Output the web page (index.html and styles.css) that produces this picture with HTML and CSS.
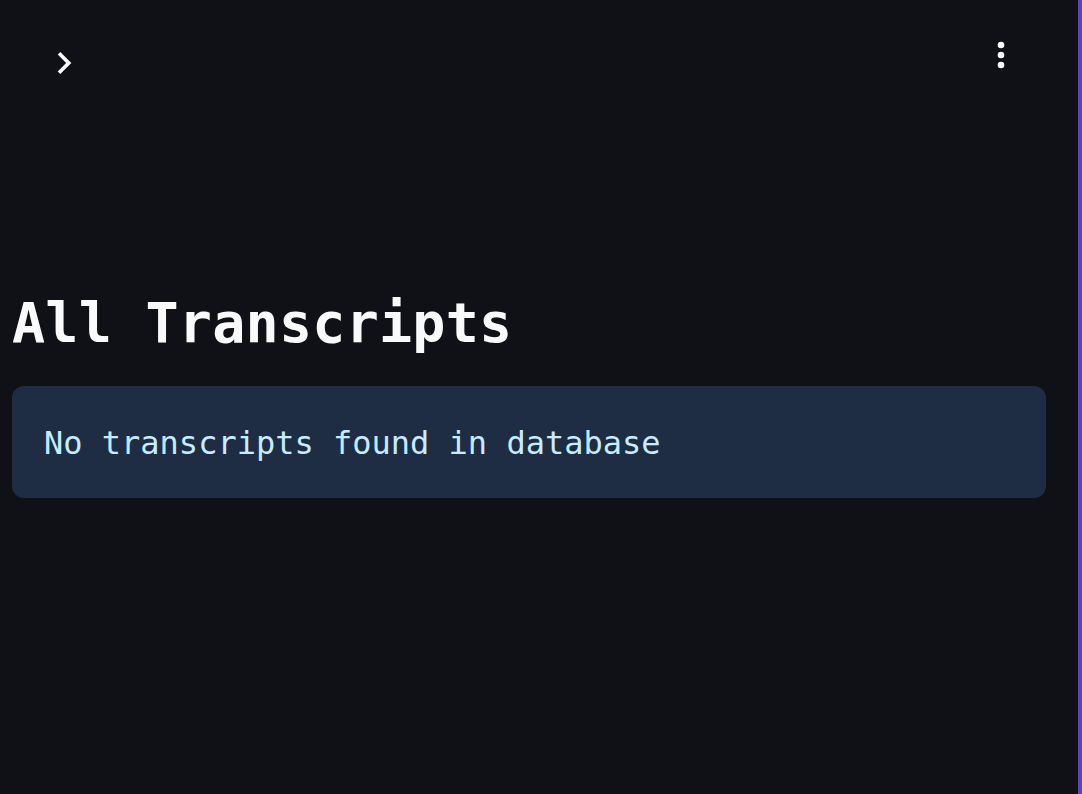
FILE: index.html
```html
<!DOCTYPE html>
<html lang="en">
<head>
<meta charset="utf-8">
<title>All Transcripts</title>
<link rel="stylesheet" href="styles.css">
</head>
<body>
<div class="app">
  <div class="main">
    <header class="topbar">
      <button class="icon-btn chevron" aria-label="Open sidebar">
        <svg viewBox="0 0 24 24" width="44" height="44"><path d="M10 6L8.59 7.41 13.17 12l-4.58 4.59L10 18l6-6z" fill="#fafafa"/></svg>
      </button>
      <button class="icon-btn menu" aria-label="Main menu">
        <svg viewBox="0 0 24 24" width="40" height="40"><circle cx="12" cy="6" r="2" fill="#fafafa"/><circle cx="12" cy="12" r="2" fill="#fafafa"/><circle cx="12" cy="18" r="2" fill="#fafafa"/></svg>
      </button>
    </header>
    <section class="content">
      <h1 class="title">All Transcripts</h1>
      <div class="alert">No transcripts found in database</div>
    </section>
  </div>
  <div class="stripe"></div>
</div>
</body>
</html>
```
FILE: styles.css
```css
html, body {
  margin: 0;
  padding: 0;
  background: #0f1117;
  height: 100%;
}
.app {
  display: flex;
  min-height: 100vh;
  font-family: "DejaVu Sans Mono", "Liberation Mono", monospace;
}
.main {
  flex: 1;
  display: flex;
  flex-direction: column;
}
.stripe {
  width: 4px;
  background: #5b3fd0;
}
.topbar {
  display: flex;
  justify-content: space-between;
  align-items: flex-start;
  padding: 35px 57px 0 42px;
}
.icon-btn {
  background: none;
  border: 0;
  padding: 0;
  margin: 0;
  display: block;
  line-height: 0;
}
.chevron {
  margin-top: 6px;
}
.content {
  padding: 0 32px 0 12px;
  margin-top: 205px;
}
.title {
  margin: 0;
  font-size: 55px;
  line-height: 66px;
  font-weight: 700;
  letter-spacing: 0.25px;
  color: #fafafa;
}
.alert {
  margin-top: 30px;
  background: #1f2d44;
  border-radius: 12px;
  padding: 33px 32px 31px;
  font-size: 32px;
  line-height: 48px;
  color: #c7ebff;
}
```
